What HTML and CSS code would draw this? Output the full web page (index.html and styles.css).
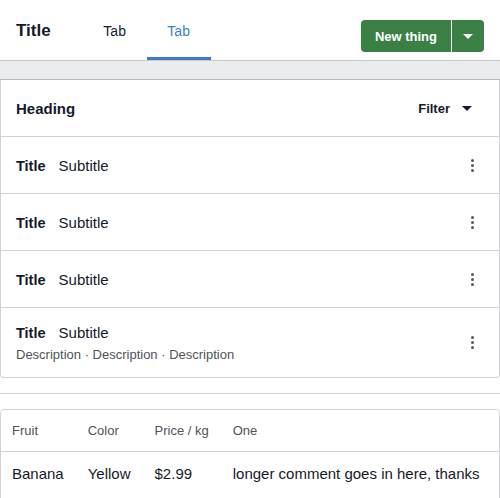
FILE: index.html
```html
<!DOCTYPE html>
<html>
<head>
<meta charset="utf-8">
<link rel="stylesheet" href="styles.css">
</head>
<body>
<header class="topbar">
  <div class="brand">Title</div>
  <nav class="tabs">
    <a class="tab">Tab</a>
    <a class="tab active">Tab</a>
  </nav>
  <div class="split-btn">
    <button class="btn-main">New thing</button>
    <button class="btn-caret"><span class="caret white"></span></button>
  </div>
</header>
<div class="band"></div>
<section class="card list-card">
  <div class="card-head">
    <h2 class="heading">Heading</h2>
    <div class="filter">Filter <span class="caret"></span></div>
  </div>
  <div class="row">
    <div class="row-main"><div class="row-line"><b>Title</b><span>Subtitle</span></div></div>
    <div class="kebab"><i></i><i></i><i></i></div>
  </div>
  <div class="row">
    <div class="row-main"><div class="row-line"><b>Title</b><span>Subtitle</span></div></div>
    <div class="kebab"><i></i><i></i><i></i></div>
  </div>
  <div class="row">
    <div class="row-main"><div class="row-line"><b>Title</b><span>Subtitle</span></div></div>
    <div class="kebab"><i></i><i></i><i></i></div>
  </div>
  <div class="row row-tall">
    <div class="row-main">
      <div class="row-line"><b>Title</b><span>Subtitle</span></div>
      <div class="desc">Description · Description · Description</div>
    </div>
    <div class="kebab"><i></i><i></i><i></i></div>
  </div>
</section>
<hr class="divider">
<section class="card table-card">
  <table class="data">
    <thead>
      <tr><th>Fruit</th><th>Color</th><th>Price / kg</th><th class="wide">One</th></tr>
    </thead>
    <tbody>
      <tr><td>Banana</td><td>Yellow</td><td>$2.99</td><td class="wide">longer comment goes in here, thanks</td></tr>
    </tbody>
  </table>
</section>
</body>
</html>
```
FILE: styles.css
```css
* { box-sizing: border-box; }
html, body { margin: 0; padding: 0; }
body {
  font-family: "Liberation Sans", Arial, sans-serif;
  color: #151a2b;
  background: #fff;
  width: 500px;
  height: 498px;
  overflow: hidden;
}
.topbar {
  height: 61px;
  display: flex;
  align-items: stretch;
  padding: 0 16px;
  border-bottom: 1px solid #c7c7c9;
}
.brand {
  font-size: 17px;
  font-weight: bold;
  display: flex;
  align-items: center;
  margin-right: 32px;
  padding-top: 1px;
}
.tabs { display: flex; align-items: stretch; }
.tab {
  font-size: 14px;
  width: 64px;
  display: flex;
  align-items: center;
  justify-content: center;
  border-bottom: 3px solid transparent;
  padding-top: 4px;
  color: #151a2b;
}
.active { color: #3c7fc6; border-bottom-color: #3b7cc8; }
.split-btn {
  margin-left: auto;
  display: flex;
  align-self: flex-start;
  margin-top: 20px;
  height: 32px;
}
.split-btn button {
  border: 0;
  background: #3a8045;
  color: #fff;
  font-family: inherit;
  height: 32px;
  cursor: pointer;
}
.btn-main {
  font-size: 13px;
  font-weight: bold;
  padding: 0 14px;
  border-radius: 4px 0 0 4px;
  margin-right: 1px;
}
.btn-caret {
  width: 32px;
  border-radius: 0 4px 4px 0;
  display: flex;
  align-items: center;
  justify-content: center;
}
.caret {
  display: inline-block;
  width: 0; height: 0;
  border-left: 5px solid transparent;
  border-right: 5px solid transparent;
  border-top: 5px solid #151a2b;
}
.caret.white { border-top-color: #fff; }
.band {
  height: 19px;
  background: #ebecee;
  border-bottom: 1px solid #b9babc;
}
.card {
  border: 1px solid #d2d2d4;
  border-radius: 4px;
  background: #fff;
}
.list-card { border-top: 0; border-radius: 0 0 4px 4px; }
.card-head {
  height: 57px;
  display: flex;
  align-items: center;
  padding: 0 15px;
  border-bottom: 1px solid #d2d2d4;
}
.heading { font-size: 15px; font-weight: bold; margin: 0; }
.filter {
  margin-left: auto;
  font-size: 13px;
  font-weight: bold;
  display: flex;
  align-items: center;
  gap: 12px;
  margin-right: 12px;
}
.row {
  display: flex;
  align-items: center;
  height: 57px;
  padding: 0 15px;
  border-bottom: 1px solid #d2d2d4;
}
.row:last-child { border-bottom: 0; }
.row-tall { height: 69px; }
.row-main { flex: 1; }
.row-line { font-size: 15px; display: flex; align-items: baseline; gap: 13px; }
.row-line b { font-size: 14.5px; }
.desc { font-size: 13px; color: #4f5258; margin-top: 6px; }
.kebab {
  display: flex;
  flex-direction: column;
  gap: 2px;
  margin-right: 10px;
}
.kebab i { width: 3px; height: 3px; border-radius: 50%; background: #55575d; }
.divider {
  border: 0;
  border-top: 1px solid #d2d2d4;
  margin: 15px 0;
}
.table-card { height: 120px; }
.data { border-collapse: collapse; width: 100%; }
.data th, .data td {
  white-space: nowrap;
  text-align: left;
  padding: 0 12px;
}
.data th:first-child, .data td:first-child { padding-left: 11px; }
.data th {
  font-size: 13px;
  font-weight: normal;
  color: #4f5258;
  height: 41px;
  border-bottom: 1px solid #d2d2d4;
  padding-top: 1px;
}
.data td { font-size: 15px; height: 44px; }
.data .wide { width: 100%; }
```
